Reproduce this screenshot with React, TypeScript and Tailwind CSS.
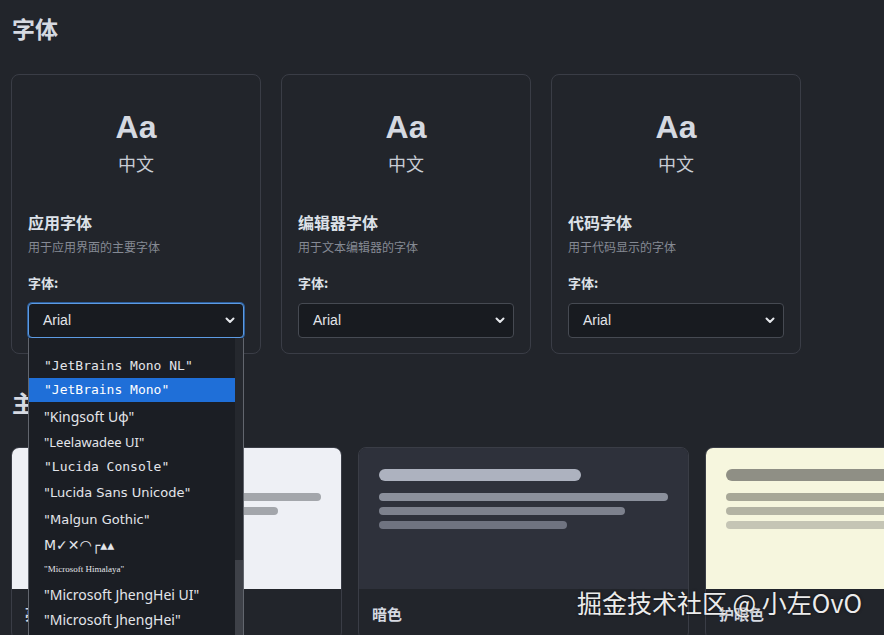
import React from "react";

type FontCard = {
  title: string;
  desc: string;
  open?: boolean;
};

type ThemeCard = {
  label: string;
  preview: string;
  bars: [string, string, string, string];
};

const fontCards: FontCard[] = [
  { title: "应用字体", desc: "用于应用界面的主要字体", open: true },
  { title: "编辑器字体", desc: "用于文本编辑器的字体" },
  { title: "代码字体", desc: "用于代码显示的字体" },
];

const themes: ThemeCard[] = [
  { label: "亮色", preview: "bg-[#eef0f5]", bars: ["bg-[#a3a6ab]", "bg-[#a3a6ab]", "bg-[#a3a6ab]", "bg-[#b4b7bc]"] },
  { label: "暗色", preview: "bg-[#2e313b]", bars: ["bg-[#adb2bf]", "bg-[#8b909c]", "bg-[#7d818d]", "bg-[#6f7380]"] },
  { label: "护眼色", preview: "bg-[#f6f6de]", bars: ["bg-[#8f8f85]", "bg-[#a7a797]", "bg-[#b3b3a3]", "bg-[#c5c5b5]"] },
];

const sans = "font-['Liberation_Sans','Noto_Sans_CJK_SC',sans-serif]";
const mono = "font-['DejaVu_Sans_Mono','Noto_Sans_CJK_SC',monospace]";

// open native-looking option list under the first select
const options: { text: string; h: string; cls: string; selected?: boolean }[] = [
  { text: "", h: "h-[15px]", cls: "" },
  { text: '"JetBrains Mono NL"', h: "h-[25px]", cls: `${mono} text-[13px]` },
  { text: '"JetBrains Mono"', h: "h-[24px]", cls: `${mono} text-[13px]`, selected: true },
  { text: '"Kingsoft U\u0444"', h: "h-[28px]", cls: "font-['Noto_Sans',sans-serif] text-[14px]" },
  { text: '"Leelawadee UI"', h: "h-[25px]", cls: "font-['Noto_Sans',sans-serif] text-[13px]" },
  { text: '"Lucida Console"', h: "h-[24px]", cls: `${mono} text-[13px]` },
  { text: '"Lucida Sans Unicode"', h: "h-[27px]", cls: "font-['DejaVu_Sans',sans-serif] text-[13px]" },
  { text: '"Malgun Gothic"', h: "h-[27px]", cls: "font-['DejaVu_Sans',sans-serif] text-[13px]" },
  { text: "M\u2713\u2715\u25E0\u250C\u25B4\u25B4", h: "h-[24px]", cls: "font-['DejaVu_Sans',sans-serif] text-[14px]" },
  { text: '"Microsoft Himalaya"', h: "h-[25px]", cls: "font-['Liberation_Serif',serif] text-[9px]" },
  { text: '"Microsoft JhengHei UI"', h: "h-[25px]", cls: "font-['Noto_Sans',sans-serif] text-[14px]" },
  { text: '"Microsoft JhengHei"', h: "h-[25px]", cls: "font-['Noto_Sans',sans-serif] text-[14px]" },
];

const Chevron = () => (
  <svg width="10" height="7" viewBox="0 0 10 7" className="shrink-0">
    <path d="M1.5 1.5 L5 5 L8.5 1.5" fill="none" stroke="#e5e7eb" strokeWidth="2" strokeLinecap="round" strokeLinejoin="round" />
  </svg>
);

const OptionList = () => (
  <div className="absolute left-0 top-full z-20 flex h-[300px] w-[216px] border-x border-[#62666e] bg-[#1b1e24]">
    <div className="flex w-[206px] flex-col">
      {options.map((o, i) => (
        <div
          key={i}
          className={`flex ${o.h} items-center px-[15px] whitespace-nowrap ${o.cls} ${
            o.selected ? "bg-[#1f6fd8] text-white" : "text-[#e3e5ea]"
          }`}
        >
          {o.text}
        </div>
      ))}
    </div>
    <div className="flex w-[8px] flex-col bg-[#25282e]">
      <div className="h-[222px]" />
      <div className="flex-1 bg-[#3e4148]" />
    </div>
  </div>
);

const FontCardView = ({ card }: { card: FontCard }) => (
  <div className="flex w-[250px] flex-col rounded-lg border border-[#3a3d46] px-4 pt-[32px] pb-[15px]">
    <div className={`text-center text-[32px] font-bold leading-[40px] text-[#d5d9e1] ${sans}`}>Aa</div>
    <div className="mt-[3px] text-center text-[18px] leading-[26px] text-[#c9cdd5]">中文</div>
    <div className="mt-[34px] text-[16px] font-bold leading-[24px] text-[#dde1e8]">{card.title}</div>
    <div className="mt-[4px] text-[12px] leading-[18px] text-[#858a94]">{card.desc}</div>
    <div className="mt-[17px] text-[13px] font-bold leading-[20px] text-[#dde1e8]">字体:</div>
    <div className="relative mt-[10px]">
      <div
        className={`flex h-[35px] items-center justify-between rounded-[4px] bg-[#181b20] pl-[14px] pr-[8px] text-[14px] text-[#e3e5ea] ${sans} ${
          card.open ? "border border-[#5d9be3] ring-1 ring-[#2d5f9c]" : "border border-[#464a52]"
        }`}
      >
        <span>Arial</span>
        <Chevron />
      </div>
      {card.open && <OptionList />}
    </div>
  </div>
);

const ThemeCardView = ({ theme }: { theme: ThemeCard }) => (
  <div className="flex w-[331px] shrink-0 flex-col overflow-hidden rounded-lg border border-[#3a3d46]">
    <div className={`flex h-[141px] flex-col px-[20px] pt-[21px] ${theme.preview}`}>
      <div className={`h-[12px] w-[202px] rounded-full ${theme.bars[0]}`} />
      <div className={`mt-[12px] h-[8px] w-[289px] rounded-full ${theme.bars[1]}`} />
      <div className={`mt-[6px] h-[8px] w-[246px] rounded-full ${theme.bars[2]}`} />
      <div className={`mt-[6px] h-[8px] w-[188px] rounded-full ${theme.bars[3]}`} />
    </div>
    <div className="px-[13px] pt-[14px] pb-[14px] text-[15px] font-bold leading-[22px] text-[#d6dae2]">
      {theme.label}
    </div>
  </div>
);

export default function App() {
  return (
    <div className="relative h-[635px] w-[884px] overflow-hidden bg-[#22252b] font-['Noto_Sans_CJK_SC',sans-serif]">
      <div className="flex flex-col px-[11px] pt-[12px]">
        <h2 className="pl-[1px] text-[23px] font-bold leading-[32px] text-[#d5d9e1]">字体</h2>
        <div className="mt-[30px] flex gap-[20px]">
          {fontCards.map((c) => (
            <FontCardView key={c.title} card={c} />
          ))}
        </div>

        <h2 className="mt-[32px] pl-[1px] text-[23px] font-bold leading-[32px] text-[#d5d9e1]">主题</h2>
        <div className="mt-[29px] flex gap-[16px]">
          {themes.map((t) => (
            <ThemeCardView key={t.label} theme={t} />
          ))}
        </div>
      </div>

      <div className="pointer-events-none absolute bottom-[18px] right-[22px] z-30 text-[25px] leading-[30px] text-[#ececec] [text-shadow:0_0_3px_rgba(0,0,0,0.6)]">
        掘金技术社区 @ 小左OvO
      </div>
    </div>
  );
}
